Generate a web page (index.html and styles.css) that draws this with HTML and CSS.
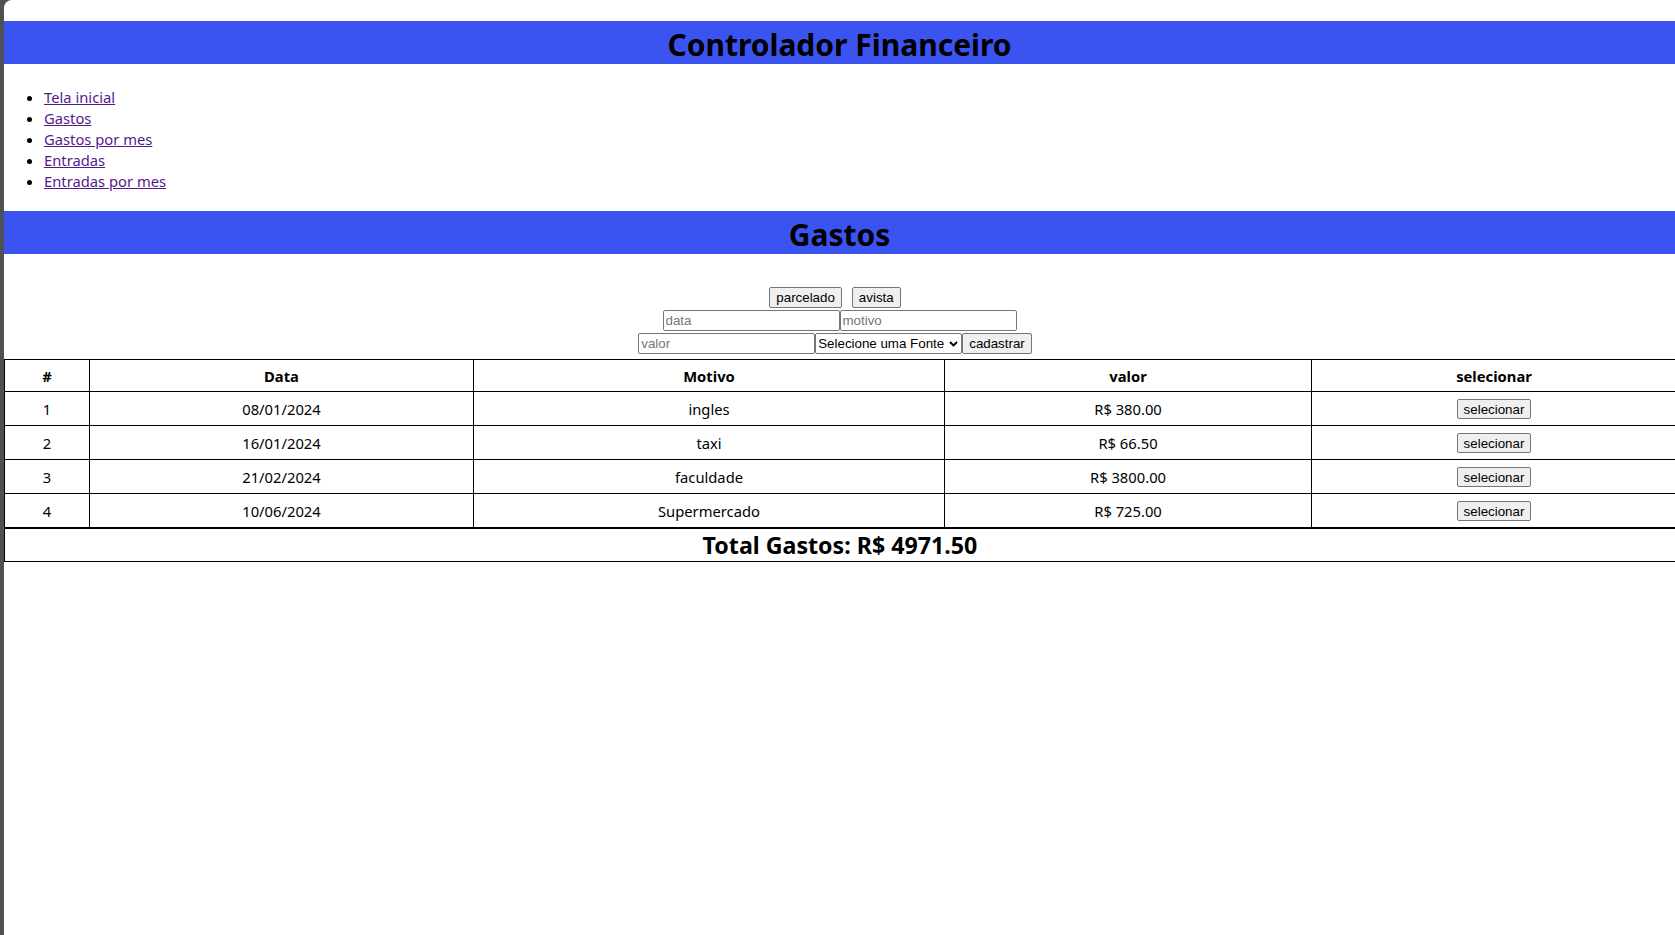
FILE: index.html
```html
<!DOCTYPE html>
<html lang="pt-BR">
<head>
<meta charset="utf-8">
<title>Controlador Financeiro</title>
<link rel="stylesheet" href="styles.css">
</head>
<body>
<div class="page">
  <h1 class="band">Controlador Financeiro</h1>
  <ul class="nav">
    <li><a href="#">Tela inicial</a></li>
    <li><a href="#">Gastos</a></li>
    <li><a href="#">Gastos por mes</a></li>
    <li><a href="#">Entradas</a></li>
    <li><a href="#">Entradas por mes</a></li>
  </ul>
  <h1 class="band band-section">Gastos</h1>
  <div class="form">
    <div class="row row-tipo">
      <button class="btn">parcelado</button>
      <button class="btn">avista</button>
    </div>
    <div class="row">
      <input class="field" type="text" placeholder="data">
      <input class="field" type="text" placeholder="motivo">
    </div>
    <div class="row row-shift">
      <input class="field" type="text" placeholder="valor">
      <div class="select-wrap">
        <select class="select"><option>Selecione uma Fonte</option></select>
        <svg class="chev" width="9" height="6" viewBox="0 0 9 6"><path d="M1 1 L4.5 4.5 L8 1" fill="none" stroke="#000" stroke-width="1.8"/></svg>
      </div>
      <button class="btn">cadastrar</button>
    </div>
  </div>
  <table class="grid">
    <colgroup>
      <col class="c1"><col class="c2"><col class="c3"><col class="c4"><col class="c5">
    </colgroup>
    <thead>
      <tr><th>#</th><th>Data</th><th>Motivo</th><th>valor</th><th>selecionar</th></tr>
    </thead>
    <tbody>
      <tr><td>1</td><td>08/01/2024</td><td>ingles</td><td>R$ 380.00</td><td><button class="btn">selecionar</button></td></tr>
      <tr><td>2</td><td>16/01/2024</td><td>taxi</td><td>R$ 66.50</td><td><button class="btn">selecionar</button></td></tr>
      <tr><td>3</td><td>21/02/2024</td><td>faculdade</td><td>R$ 3800.00</td><td><button class="btn">selecionar</button></td></tr>
      <tr><td>4</td><td>10/06/2024</td><td>Supermercado</td><td>R$ 725.00</td><td><button class="btn">selecionar</button></td></tr>
    </tbody>
  </table>
  <div class="total">Total Gastos: R$ 4971.50</div>
</div>
</body>
</html>
```
FILE: styles.css
```css
html, body {
  margin: 0;
  padding: 0;
  background: #4f5055;
}
body {
  font-family: "Noto Sans", sans-serif;
  font-size: 14.75px;
  color: #000;
}
.page {
  margin-left: 4px;
  width: 1671px;
  height: 935px;
  background: #fff;
  border-top-left-radius: 8px;
  overflow: hidden;
  display: flow-root;
}
.band {
  margin: 21px 0;
  padding-top: 4px;
  background: #3b53f1;
  text-align: center;
  font-size: 30px;
  font-weight: 700;
  line-height: 39px;
}
.band-section {
  margin-top: 19px;
}
.nav {
  margin: 21px 0 0;
  padding: 2px 0 0 40px;
  line-height: 21px;
}
.nav a {
  color: #551a8b;
}
.form {
  padding-top: 12px;
  display: flex;
  flex-direction: column;
  align-items: center;
  gap: 2px;
}
.row {
  display: flex;
  align-items: center;
}
.row-tipo {
  gap: 10px;
  margin-right: 9px;
}
.row-shift {
  margin-right: 9px;
}
.btn {
  font-family: "Liberation Sans", Arial, sans-serif;
  font-size: 13.33px;
  line-height: 15px;
  height: 21px;
  padding: 1px 6px;
  background: #efefef;
  border: 1px solid #767676;
  border-radius: 2px;
  color: #000;
}
.field {
  box-sizing: border-box;
  width: 177px;
  height: 21px;
  padding: 1px 2px;
  font-family: "Liberation Sans", Arial, sans-serif;
  font-size: 13.33px;
  border: 1px solid #767676;
  border-radius: 2px;
  margin: 0;
}
.field::placeholder {
  color: #757575;
}
.select-wrap {
  position: relative;
  display: flex;
}
.select {
  appearance: none;
  -webkit-appearance: none;
  box-sizing: border-box;
  width: 147px;
  height: 21px;
  padding: 0 12px 0 2px;
  font-family: "Liberation Sans", Arial, sans-serif;
  font-size: 13.33px;
  color: #000;
  background: #fff;
  border: 1px solid #767676;
  border-radius: 2px;
  margin: 0;
}
.chev {
  position: absolute;
  right: 4px;
  top: 8px;
  pointer-events: none;
}
.grid {
  margin-top: 5px;
  width: 1672px;
  table-layout: fixed;
  border-collapse: collapse;
  border: 1px solid #000;
}
.c1 { width: 85px; }
.c2 { width: 384px; }
.c3 { width: 471px; }
.c4 { width: 367px; }
.c5 { width: 365px; }
.grid th, .grid td {
  border: 1px solid #000;
  text-align: center;
  line-height: 21px;
}
.grid th {
  padding: 6px 1px 4px;
  font-weight: 700;
}
.grid td {
  padding: 7px 1px 5px;
}
.grid td .btn {
  vertical-align: top;
  margin-top: 0;
  height: 20px;
  padding: 1px 6px;
}
.total {
  width: 1672px;
  box-sizing: border-box;
  border: 1px solid #000;
  padding-top: 1px;
  text-align: center;
  font-size: 23.2px;
  font-weight: 700;
  line-height: 31px;
}
```
